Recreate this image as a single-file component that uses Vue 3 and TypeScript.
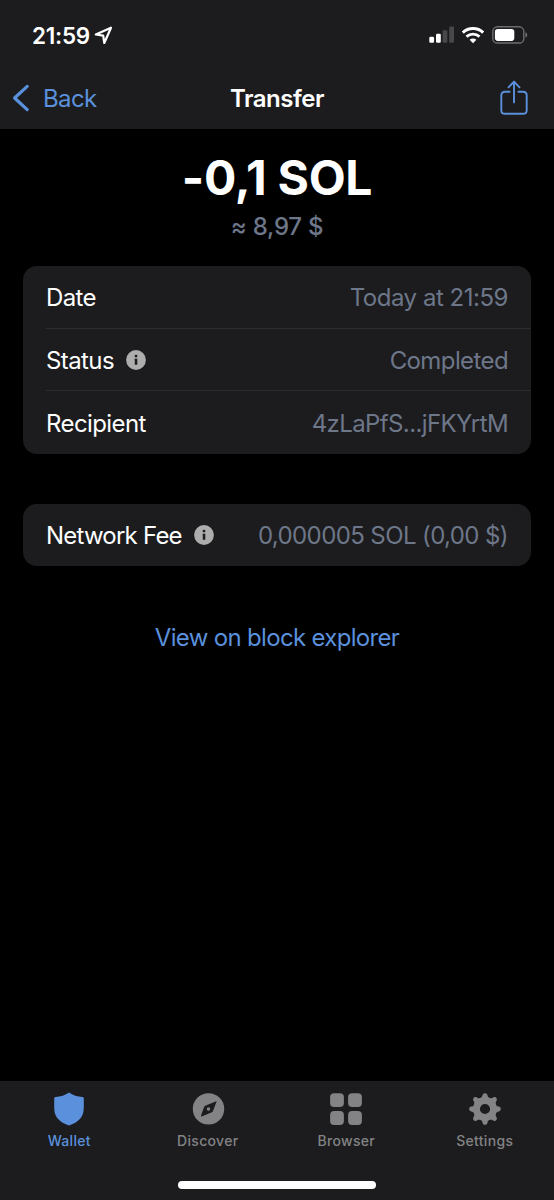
<script setup lang="ts">
interface DetailRow {
  id: string
  label: string
  value: string
  info: boolean
}

interface Tab {
  id: string
  label: string
  active: boolean
}

const groups: DetailRow[][] = [
  [
    { id: 'date', label: 'Date', value: 'Today at 21:59', info: false },
    { id: 'status', label: 'Status', value: 'Completed', info: true },
    { id: 'recipient', label: 'Recipient', value: '4zLaPfS...jFKYrtM', info: false },
  ],
  [{ id: 'fee', label: 'Network Fee', value: '0,000005 SOL (0,00 $)', info: true }],
]

const tabs: Tab[] = [
  { id: 'wallet', label: 'Wallet', active: true },
  { id: 'discover', label: 'Discover', active: false },
  { id: 'browser', label: 'Browser', active: false },
  { id: 'settings', label: 'Settings', active: false },
]

const teeth: number[] = [0, 45, 90, 135, 180, 225, 270, 315]
</script>

<template>
  <div class="screen">
    <header class="top">
      <div class="status-bar">
        <div class="clock">
          <span class="time">21:59</span>
          <svg class="location" width="19" height="19" viewBox="0 0 19 19">
            <path d="M17 1.7 1.8 8.5 9.2 9.7 10.3 17Z" fill="none" stroke="#fff" stroke-width="2.2" stroke-linejoin="round" />
          </svg>
        </div>
        <div class="indicators">
          <svg width="26" height="18" viewBox="0 0 26 18">
            <rect x="0.3" y="10.7" width="4.8" height="6" rx="1.3" fill="#fff" />
            <rect x="7" y="7.8" width="4.8" height="8.9" rx="1.3" fill="#fff" />
            <rect x="13.6" y="4.3" width="4.8" height="12.4" rx="1.3" fill="#48484a" />
            <rect x="20.2" y="0.5" width="4.8" height="16.2" rx="1.3" fill="#48484a" />
          </svg>
          <svg class="wifi" width="24" height="18" viewBox="0 0 24 18">
            <path d="M1.8 6.6C7.5 1.2 16.5 1.2 22.2 6.6" fill="none" stroke="#fff" stroke-width="3" />
            <path d="M5.5 10.6C9.2 7.2 14.8 7.2 18.5 10.6" fill="none" stroke="#fff" stroke-width="2.8" />
            <path d="M8.6 13.8C10.6 12.1 13.4 12.1 15.4 13.8L12 17.3Z" fill="#fff" />
          </svg>
          <svg class="battery" width="36" height="18" viewBox="0 0 36 18">
            <rect x="0.8" y="0.8" width="31" height="16.2" rx="4.6" fill="none" stroke="#6c6c6e" stroke-width="1.4" />
            <rect x="2.9" y="2.9" width="19.4" height="12" rx="2.8" fill="#fff" />
            <path d="M33.4 6.2C35.9 7.2 35.9 10.6 33.4 11.6Z" fill="#6c6c6e" />
          </svg>
        </div>
      </div>
      <nav class="nav">
        <button class="back" type="button">
          <svg width="18" height="28" viewBox="0 0 18 28">
            <path d="M15.2 2.4 2.6 14 15.2 25.6" fill="none" stroke="#5a90dc" stroke-width="3.2" stroke-linecap="round" stroke-linejoin="round" />
          </svg>
          <span class="back-label">Back</span>
        </button>
        <h1 class="title">Transfer</h1>
        <button class="share" type="button" aria-label="Share">
          <svg width="28" height="36" viewBox="0 0 28 36">
            <path
              d="M9.6 11.8H5C2.6 11.8 1.3 13 1.3 15.4V30.2C1.3 32.6 2.6 33.8 5 33.8H23C25.4 33.8 26.7 32.6 26.7 30.2V15.4C26.7 13 25.4 11.8 23 11.8H18.4M14 22.4V1.8M8.5 7.3 14 1.6 19.5 7.3"
              fill="none" stroke="#5a90dc" stroke-width="1.9" stroke-linecap="round" stroke-linejoin="round" />
          </svg>
        </button>
      </nav>
    </header>

    <main class="content">
      <p class="amount">-0,1 SOL</p>
      <p class="fiat">≈ 8,97 $</p>

      <section v-for="(rows, index) in groups" :key="index" class="card">
        <div v-for="row in rows" :key="row.id" class="row" :class="row.id">
          <span class="label">{{ row.label }}</span>
          <svg v-if="row.info" class="info" width="20" height="20" viewBox="0 0 20 20">
            <circle cx="10" cy="10" r="9.9" fill="#adadad" />
            <circle cx="10" cy="6.1" r="1.45" fill="#1c1c1e" />
            <path d="M8.6 8.8H11.3V14.8H8.8V10.2H8.6Z" fill="#1c1c1e" />
          </svg>
          <span class="value">{{ row.value }}</span>
        </div>
      </section>

      <a class="explorer">View on block explorer</a>
    </main>

    <footer class="tab-bar">
      <div class="tabs">
        <div v-for="tab in tabs" :key="tab.id" class="tab" :class="{ active: tab.active }">
          <svg class="tab-icon" width="34" height="34" viewBox="0 0 34 34" fill="currentColor">
            <path
              v-if="tab.id === 'wallet'"
              d="M17 .5C20.8 3.2 25.5 4.9 30.4 4.9C31.3 4.9 31.8 5.5 31.8 6.4V15.5C31.8 25 27.5 29.6 17 33.5C6.5 29.6 2.2 25 2.2 15.5V6.4C2.2 5.5 2.7 4.9 3.6 4.9C8.5 4.9 13.2 3.2 17 .5Z" />
            <path
              v-else-if="tab.id === 'discover'"
              fill-rule="evenodd"
              d="M17.5 1.2A15.7 15.7 0 1 0 17.5 32.6A15.7 15.7 0 1 0 17.5 1.2ZM24.7 9.4Q25.7 9.1 25.4 10.1L22 18.9Q21.7 19.6 21 20.2L11.2 24.3Q9.5 25 10.1 23.3L13.1 15Q13.4 14.2 14.2 13.7ZM17.5 15.2A1.8 1.8 0 1 0 17.5 18.8A1.8 1.8 0 1 0 17.5 15.2Z" />
            <template v-else-if="tab.id === 'browser'">
              <rect x="1.1" y="1.2" width="13.8" height="13.8" rx="4" />
              <rect x="19.1" y="1.2" width="13.8" height="13.8" rx="4" />
              <rect x="1.1" y="19.1" width="13.8" height="13.8" rx="4" />
              <rect x="19.1" y="19.1" width="13.8" height="13.8" rx="4" />
            </template>
            <g v-else transform="translate(17 17)">
              <circle r="8.5" fill="none" stroke="currentColor" stroke-width="6.8" />
              <path
                v-for="angle in teeth"
                :key="angle"
                :transform="`rotate(${angle})`"
                d="M-4.6 -10.6C-3.2 -11.2 -2.8 -12.4 -2.4 -13.9C-1.8 -16.4 1.8 -16.4 2.4 -13.9C2.8 -12.4 3.2 -11.2 4.6 -10.6Z" />
            </g>
          </svg>
          <span class="tab-label">{{ tab.label }}</span>
        </div>
      </div>
      <div class="home-indicator"></div>
    </footer>
  </div>
</template>

<style>
body {
  margin: 0;
  background: #000;
}
</style>

<style scoped>
.screen {
  display: flex;
  flex-direction: column;
  width: 554px;
  height: 1200px;
  overflow: hidden;
  background: #000;
  color: #fff;
  font-family: Inter, Roboto, 'Liberation Sans', sans-serif;
  font-size: 24px;
  letter-spacing: -0.6px;
}

svg {
  display: block;
  flex: none;
}

.top {
  height: 129px;
  flex: none;
  background: #1c1c1e;
}

.status-bar {
  display: flex;
  justify-content: space-between;
  height: 70px;
  padding: 0 26px 0 32px;
}

.clock,
.indicators {
  display: flex;
  align-items: center;
}

.time {
  font-size: 22.5px;
  font-weight: 600;
  letter-spacing: -0.25px;
}

.location {
  margin-left: 4px;
}

.wifi {
  margin-left: 6px;
}

.battery {
  margin-left: 7px;
}

.nav {
  display: grid;
  grid-template-columns: 1fr auto 1fr;
  align-items: center;
  height: 56px;
  padding: 0 26px 0 12px;
}

button {
  padding: 0;
  border: 0;
  background: none;
  color: inherit;
  font: inherit;
  letter-spacing: inherit;
}

.back {
  display: flex;
  align-items: center;
  color: #5a90dc;
}

.back-label {
  margin-left: 13px;
}

.title {
  margin: 0 0 0 14px;
  font-size: 24px;
  font-weight: 600;
  letter-spacing: -0.5px;
}

.share {
  justify-self: end;
}

.content {
  display: flex;
  flex: 1;
  flex-direction: column;
  align-items: center;
}

.amount {
  margin: 20px 0 0;
  font-size: 48px;
  font-weight: 700;
  font-feature-settings: 'calt' 0;
  letter-spacing: -0.3px;
  line-height: 58px;
}

.fiat {
  margin: 4px 0 24px;
  color: #6d7789;
  font-weight: 500;
  letter-spacing: -0.25px;
  line-height: 31px;
}

.card {
  width: 508px;
  margin-bottom: 50px;
  border-radius: 14px;
  background: #1c1c1e;
}

.row {
  display: flex;
  align-items: center;
  height: 62.5px;
  margin-left: 23px;
  padding: 2px 23px 0 0;
  box-sizing: border-box;
}

.row:not(:last-child) {
  border-bottom: 1px solid #2d2d2f;
}

.fee {
  padding-top: 1px;
}

.info {
  margin-left: 12px;
}

.value {
  margin-left: auto;
  color: #6d7789;
}

.date .value {
  letter-spacing: -0.47px;
}

.fee .label {
  letter-spacing: -0.78px;
}

.explorer {
  margin-top: 7px;
  color: #5a90dc;
  letter-spacing: -0.68px;
  line-height: 30px;
}

.tab-bar {
  display: flex;
  flex: none;
  flex-direction: column;
  align-items: center;
  justify-content: space-between;
  height: 119px;
  padding-bottom: 11px;
  box-sizing: border-box;
  background: #1c1c1e;
}

.tabs {
  display: grid;
  grid-template-columns: repeat(4, 1fr);
  width: 100%;
  padding-top: 11px;
}

.tab {
  display: flex;
  flex-direction: column;
  align-items: center;
  color: #838385;
}

.tab.active {
  color: #5a90dc;
}

.tab-label {
  margin-top: 6px;
  font-size: 14px;
  font-weight: 500;
  letter-spacing: 0.3px;
  line-height: 18px;
}

.home-indicator {
  width: 198px;
  height: 8px;
  border-radius: 4px;
  background: #fff;
}
</style>
